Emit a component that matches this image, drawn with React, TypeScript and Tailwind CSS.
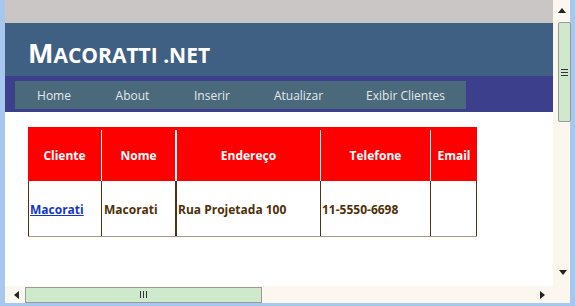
import React from "react";

const font = { fontFamily: '"Open Sans", "Noto Sans", sans-serif' };

function VScroll() {
  return (
    <div className="flex h-[286px] w-[17px] flex-col items-center bg-[#fbf7ee]">
      <div className="flex h-[20px] w-full items-center justify-center">
        <svg width="8" height="5" viewBox="0 0 8 5"><path d="M0 5 L4 0 L8 5 Z" fill="#222" /></svg>
      </div>
      <div className="ml-[5px] mt-[2px] flex h-[100px] w-[13px] items-center justify-center rounded-[2px] border border-[#9a9a9a] bg-[#cfe9cd]">
        <div className="flex flex-col gap-[2px]">
          <div className="h-px w-[7px] bg-[#333]" />
          <div className="h-px w-[7px] bg-[#333]" />
          <div className="h-px w-[7px] bg-[#333]" />
        </div>
      </div>
      <div className="flex-1" />
      <div className="mb-[10px] ml-[2px] flex h-[8px] w-full items-center justify-center">
        <svg width="8" height="5" viewBox="0 0 8 5"><path d="M0 0 L8 0 L4 5 Z" fill="#222" /></svg>
      </div>
    </div>
  );
}

function HScroll() {
  return (
    <div className="flex h-[17px] w-[548px] items-center bg-[#fbf7ee]">
      <div className="flex w-[20px] items-center justify-center pl-[3px]">
        <svg width="5" height="8" viewBox="0 0 5 8"><path d="M5 0 L0 4 L5 8 Z" fill="#222" /></svg>
      </div>
      <div className="flex h-[16px] w-[237px] items-center justify-center border border-[#9a9a9a] bg-[#cfe9cd]">
        <div className="flex gap-[2px]">
          <div className="h-[7px] w-px bg-[#333]" />
          <div className="h-[7px] w-px bg-[#333]" />
          <div className="h-[7px] w-px bg-[#333]" />
        </div>
      </div>
      <div className="flex-1" />
      <div className="mr-[8px] flex w-[6px] items-center justify-center">
        <svg width="5" height="8" viewBox="0 0 5 8"><path d="M0 0 L5 4 L0 8 Z" fill="#222" /></svg>
      </div>
    </div>
  );
}

const navItems: [string, string][] = [
  ["Home", "w-[78px]"],
  ["About", "w-[79px]"],
  ["Inserir", "w-[80px]"],
  ["Atualizar", "w-[93px]"],
  ["Exibir Clientes", "w-[121px]"],
];

function Viewport() {
  return (
    <div className="flex h-[286px] w-[548px] flex-col overflow-hidden bg-white" style={font}>
      <div className="h-[23px] bg-[#cac6c6]" />
      <div className="h-[53px] bg-[#3f6082] pl-[23px] pt-[16px]">
        <div className="flex items-baseline font-bold leading-[27px] text-white">
          <span className="text-[27px]">M</span>
          <span className="text-[21px]">ACORATTI .NET</span>
        </div>
      </div>
      <div className="h-[36px] bg-[#3c3f8c] pl-[10px] pt-[5px]">
        <div className="flex h-[28px] w-[451px] bg-[#4a697b] pt-[2px] text-[12px] leading-[26px] text-[#e4e8ec]">
          {navItems.map(([t, w]) => (
            <div key={t} className={`${w} text-center`}>{t}</div>
          ))}
        </div>
      </div>
      <div className="flex-1 pl-[23px] pt-[15px]">
        <div className="w-[449px] text-[12px] font-bold">
          <div className="grid h-[54px] grid-cols-[73px_74px_145px_110px_47px] bg-[#ff0000] pt-[3px] text-white">
            <div className="flex items-center justify-center">Cliente</div>
            <div className="flex items-center justify-center border-l border-white">Nome</div>
            <div className="flex items-center justify-center border-l-2 border-white">Endereço</div>
            <div className="flex items-center justify-center border-l border-white">Telefone</div>
            <div className="flex items-center justify-center border-l border-white">Email</div>
          </div>
          <div className="grid h-[56px] grid-cols-[73px_74px_145px_110px_47px] border-b border-b-[#a59a78] text-[#4f3008]">
            <div className="flex items-center border-l border-[#4b3413] pl-[1px] pt-[3px]">
              <a href="#" className="text-[#1437c0] underline">Macorati</a>
            </div>
            <div className="flex items-center border-l border-[#4b3413] pl-[2px] pt-[3px]">Macorati</div>
            <div className="flex items-center border-l-2 border-[#4b3413] pl-[1px] pt-[3px]">Rua Projetada 100</div>
            <div className="flex items-center border-l border-[#4b3413] pl-[1px] pt-[3px]">11-5550-6698</div>
            <div className="border-x border-[#4b3413]" />
          </div>
        </div>
      </div>
    </div>
  );
}

export default function App() {
  return (
    <div className="flex h-[306px] w-[575px] flex-col bg-[#a7c7ee]">
      <div className="flex h-[303px]">
        <div className="w-[5px]" />
        <div className="flex w-[565px] flex-col">
          <div className="flex">
            <Viewport />
            <VScroll />
          </div>
          <div className="flex">
            <HScroll />
            <div className="h-[17px] w-[17px] bg-[#fbf7ee]" />
          </div>
        </div>
        <div className="w-[5px]" />
      </div>
      <div className="h-[3px]" />
    </div>
  );
}
